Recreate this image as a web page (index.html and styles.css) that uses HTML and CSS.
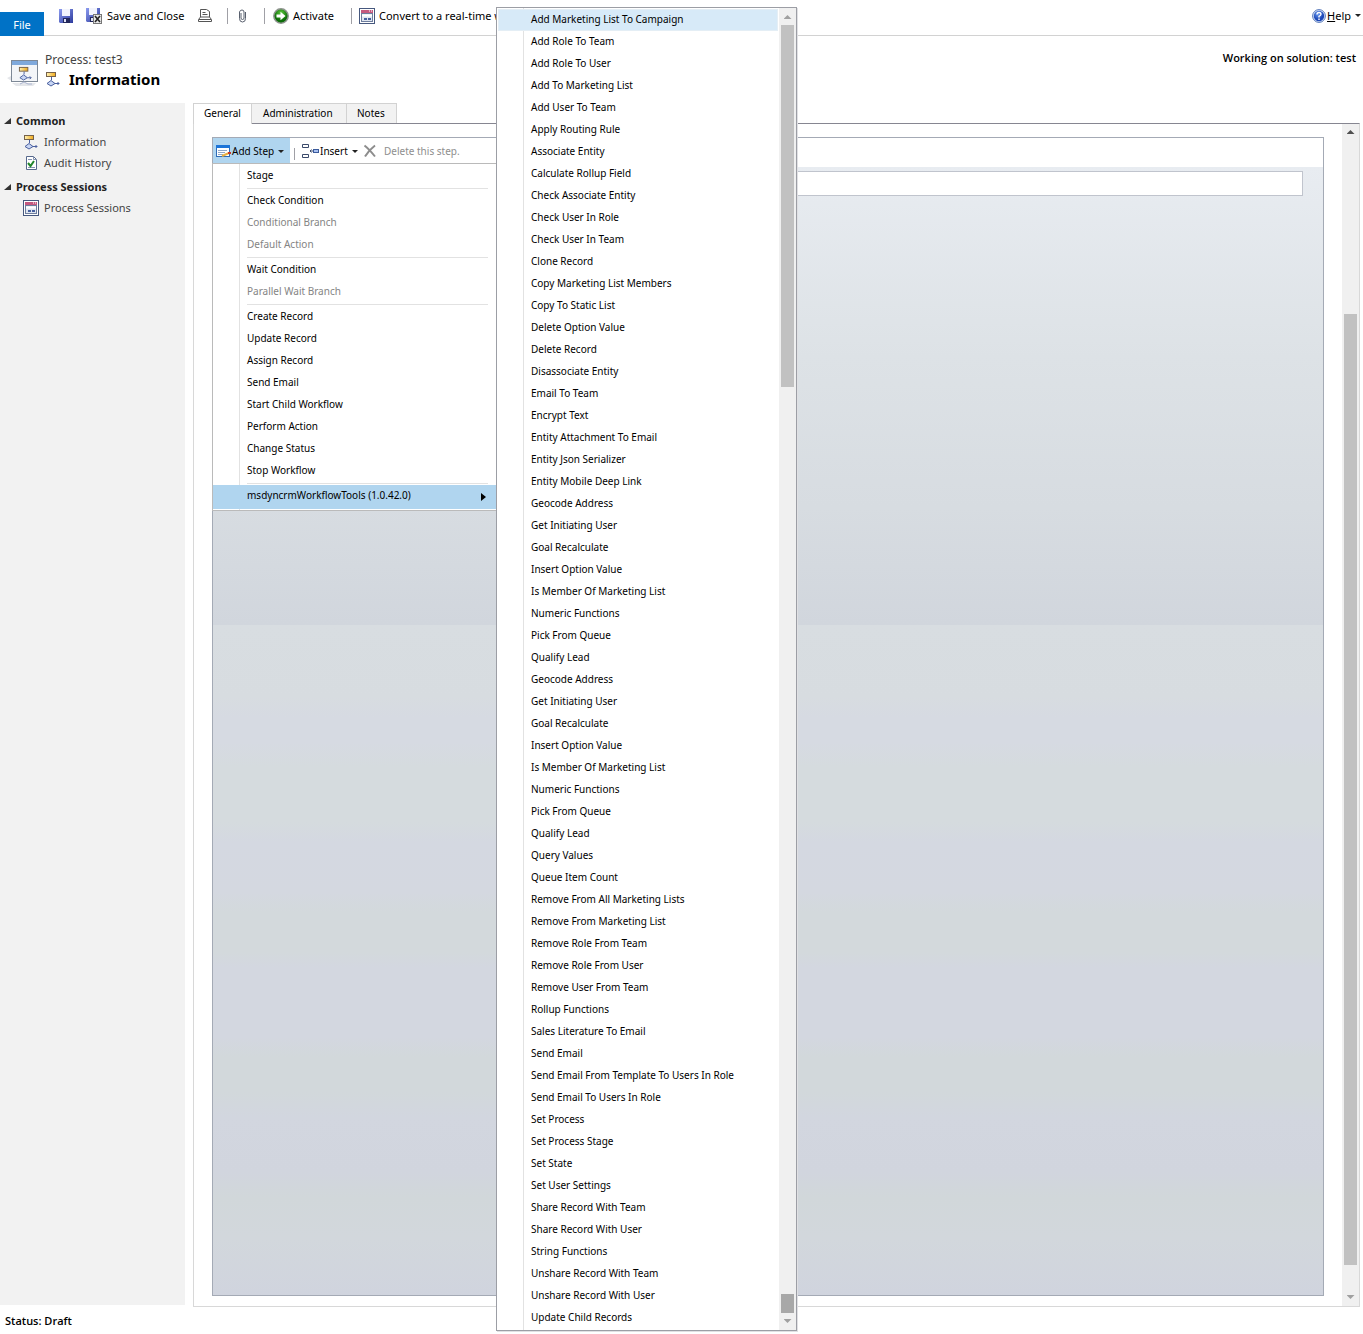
FILE: index.html
```html
<!DOCTYPE html>
<html lang="en">
<head>
<meta charset="utf-8">
<title>Process: test3</title>
<link rel="stylesheet" href="styles.css">
</head>
<body>
<svg class="defs" aria-hidden="true">
  <defs>
    <linearGradient id="gold" x1="0" x2="1"><stop offset="0" stop-color="#fff3b8"/><stop offset="1" stop-color="#f0a818"/></linearGradient>
    <linearGradient id="disk" x1="0" y1="0" x2="1" y2="1"><stop offset="0" stop-color="#8c9cf0"/><stop offset="1" stop-color="#2c3a9c"/></linearGradient>
    <radialGradient id="green" cx=".5" cy=".3"><stop offset="0" stop-color="#5cc83c"/><stop offset="1" stop-color="#0c6c08"/></radialGradient>
    <radialGradient id="blue" cx=".4" cy=".3"><stop offset="0" stop-color="#6c9cf0"/><stop offset="1" stop-color="#1c48b8"/></radialGradient>
    <symbol id="flow" viewBox="0 0 16 16">
      <rect x="1.500" y="1.500" width="9" height="4" fill="url(#gold)" stroke="#75614a"/>
      <path d="M6.500 6v3M10 12.500h4M12.500 11l1.500 1.500-1.500 1.500" fill="none" stroke="#4a5f9e"/>
      <path d="M6 9.500l4 3-4 2.500-4-2.500z" fill="#c8d6f4" stroke="#4a5f9e"/>
    </symbol>
    <symbol id="session" viewBox="0 0 16 16">
      <rect x=".5" y=".5" width="15" height="15" fill="#fff" stroke="#46587e"/>
      <path d="M2 2h12v3H2z" fill="#c4587e"/><path d="M10 3h1M12 3h1" stroke="#fff"/>
      <rect x="2.500" y="5.500" width="11" height="8" fill="#dfe6f0" stroke="#6e7d9d"/>
      <path d="M3 7.500h10" stroke="#fff" stroke-width="2"/><path d="M5 11h3M9 11h3" stroke="#465f9e" stroke-width="2"/>
    </symbol>
    <symbol id="floppy" viewBox="0 0 14 14">
      <path d="M0 0h14v14H1l-1-1z" fill="url(#disk)"/><path d="M3 0h8v7H3z" fill="#f2f4fd"/>
      <path d="M4 9h7v5H4z" fill="#23285c"/><path d="M5 10h2v3H5z" fill="#dfe2f5"/>
    </symbol>
  </defs>
</svg>

<header class="ribbon">
  <button class="file">File</button>
  <div class="commands">
    <button class="cmd save" aria-label="Save"><svg width="14" height="14"><use href="#floppy"/></svg></button>
    <button class="cmd save-close"><svg width="17" height="16" viewBox="0 0 17 16"><use href="#floppy" width="14" height="14"/><rect x="7.500" y="6.500" width="8" height="9" fill="#e8e8e8" stroke="#777"/><path d="M9 8l5 6M14 8l-5 6" stroke="#222" stroke-width="1.600"/></svg>Save and Close</button>
    <button class="cmd print" aria-label="Print"><svg width="14" height="14" viewBox="0 0 14 14"><path d="M2.500 8V.5h6l3 2V8M.5 12.500v-2L2.500 8h9l2 2.500v2zM1 10.500h12M4.500 3.500h3M4.500 5.500h5" fill="none" stroke="#555"/></svg></button>
    <span class="divider"></span>
    <button class="cmd attach" aria-label="Attach File"><svg width="9" height="14" viewBox="0 0 9 14"><path d="M3 4v5q0 1.500 1.500 1.500T6 9V3Q6 1 4 1T1.500 3v6.500q0 3.500 3 3.500t3-3.500V3" fill="none" stroke="#59606e"/></svg></button>
    <span class="divider"></span>
    <button class="cmd activate"><svg width="16" height="16" viewBox="0 0 16 16"><circle cx="8" cy="8" r="7.200" fill="url(#green)" stroke="#8e948e" stroke-width="1.500"/><path d="M3.500 6.500H7.500V3.800L12.500 8l-5 4.200V9.500h-4z" fill="#fff"/></svg>Activate</button>
    <span class="divider"></span>
    <button class="cmd convert"><svg width="16" height="16"><use href="#session"/></svg>Convert to a real-time workflow</button>
    <button class="cmd help"><svg width="14" height="14" viewBox="0 0 14 14"><circle cx="7" cy="7" r="6.400" fill="#dbe6fa" stroke="#5577b8"/><circle cx="7" cy="7" r="5.200" fill="url(#blue)"/><path d="M5 5.500Q5 3.500 7 3.500T9 5.300Q9 6.300 7 7.300V8.500M7 9.500V11" fill="none" stroke="#fff" stroke-width="1.400"/></svg><span><u>H</u>elp</span><i class="caret"></i></button>
  </div>
</header>

<section class="title">
  <svg class="title-icon" width="34" height="34" viewBox="0 0 34 34">
    <path d="M0 22l6-3v7zM5 27h24l-3 3H9z" fill="#e4e6ea"/>
    <rect x="4.500" y="4.500" width="26" height="21" fill="#f3f5f8" stroke="#7d8896"/>
    <path d="M5 5h25v4H5z" fill="#7fa9dc"/><use href="#flow" x="11" y="10" width="15" height="15"/>
    <path d="M13 28l4-2 4 2h4" fill="none" stroke="#aab4d0"/>
  </svg>
  <div class="title-text">
    <div class="record">Process: test3</div>
    <h1><svg width="16" height="16"><use href="#flow"/></svg>Information</h1>
  </div>
  <div class="solution">Working on solution: test</div>
</section>

<main class="main">
  <nav class="sidebar">
    <h2><i class="twisty"></i>Common</h2>
    <a href="#info"><svg width="16" height="16"><use href="#flow"/></svg>Information</a>
    <a href="#audit"><svg width="16" height="16" viewBox="0 0 16 16"><path d="M3.500 1.500h7l3 3v10h-10z" fill="#fff" stroke="#56688c"/><path d="M10.500 1.500v3h3M5 4.500h4M5 12.500h7" fill="none" stroke="#8493b0"/><path d="M5 8l2.500 3L11 6" fill="none" stroke="#22862a" stroke-width="2"/></svg>Audit History</a>
    <h2><i class="twisty"></i>Process Sessions</h2>
    <a href="#sessions"><svg width="16" height="16"><use href="#session"/></svg>Process Sessions</a>
  </nav>

  <div class="content">
    <div class="tabs" role="tablist">
      <button class="tab active" role="tab" aria-selected="true">General</button>
      <button class="tab admin" role="tab">Administration</button>
      <button class="tab notes" role="tab">Notes</button>
    </div>
    <div class="frame">
      <div class="page">
        <div class="designer">
          <div class="toolbar">
            <button class="tool add"><svg width="15" height="14" viewBox="0 0 15 14"><rect x=".5" y="1.500" width="13" height="11" fill="#fff" stroke="#2c6cb8"/><path d="M0 1h14v3H0z" fill="#1c74d8"/><path d="M2 6.500h9M2 8.500h7M2 10.500h5" stroke="#8fa8c8"/><path d="M6 12l7-3" stroke="#e8b040" stroke-width="2"/><path d="M12 9h3" stroke="#c83828" stroke-width="2"/></svg>Add Step<i class="caret"></i></button>
            <span class="tool-divider"></span>
            <button class="tool insert"><svg width="17" height="16" viewBox="0 0 17 16"><path d="M.5 1.500h6v3h-6zM.5 11.500h6v3h-6zM8 8h4M9.500 6.500L8 8l1.500 1.500" fill="none" stroke="#3b4a6b"/><rect x="11.500" y="6.500" width="5" height="3" fill="#a8c0f0" stroke="#3b5a9b"/></svg>Insert<i class="caret"></i></button>
            <button class="tool delete" disabled><svg width="14" height="14" viewBox="0 0 14 14"><path d="M1.500 1.500Q6 5 12 12.500M12 1.500Q6 6 2 12.500" fill="none" stroke="#8d8d8d" stroke-width="2"/></svg>Delete this step.</button>
            <ul class="menu step-menu">
              <li><button>Stage</button></li>
              <li class="sep"><button>Check Condition</button></li>
              <li><button disabled>Conditional Branch</button></li>
              <li><button disabled>Default Action</button></li>
              <li class="sep"><button>Wait Condition</button></li>
              <li><button disabled>Parallel Wait Branch</button></li>
              <li class="sep"><button>Create Record</button></li>
              <li><button>Update Record</button></li>
              <li><button>Assign Record</button></li>
              <li><button>Send Email</button></li>
              <li><button>Start Child Workflow</button></li>
              <li><button>Perform Action</button></li>
              <li><button>Change Status</button></li>
              <li><button>Stop Workflow</button></li>
              <li class="sep open"><button>msdyncrmWorkflowTools (1.0.42.0)<i class="arrow-right"></i></button></li>
            </ul>
          </div>
          <div class="canvas"><input type="text" aria-label="Step description"></div>
        </div>
      </div>
      <div class="scrollbar page-scroll"><i class="up dark"></i><div class="thumb"></div><i class="down"></i></div>
    </div>
  </div>
</main>

<footer class="status">Status: Draft</footer>

<div class="submenu">
  <ul class="menu">
    <li class="hover"><button>Add Marketing List To Campaign</button></li>
    <li><button>Add Role To Team</button></li>
    <li><button>Add Role To User</button></li>
    <li><button>Add To Marketing List</button></li>
    <li><button>Add User To Team</button></li>
    <li><button>Apply Routing Rule</button></li>
    <li><button>Associate Entity</button></li>
    <li><button>Calculate Rollup Field</button></li>
    <li><button>Check Associate Entity</button></li>
    <li><button>Check User In Role</button></li>
    <li><button>Check User In Team</button></li>
    <li><button>Clone Record</button></li>
    <li><button>Copy Marketing List Members</button></li>
    <li><button>Copy To Static List</button></li>
    <li><button>Delete Option Value</button></li>
    <li><button>Delete Record</button></li>
    <li><button>Disassociate Entity</button></li>
    <li><button>Email To Team</button></li>
    <li><button>Encrypt Text</button></li>
    <li><button>Entity Attachment To Email</button></li>
    <li><button>Entity Json Serializer</button></li>
    <li><button>Entity Mobile Deep Link</button></li>
    <li><button>Geocode Address</button></li>
    <li><button>Get Initiating User</button></li>
    <li><button>Goal Recalculate</button></li>
    <li><button>Insert Option Value</button></li>
    <li><button>Is Member Of Marketing List</button></li>
    <li><button>Numeric Functions</button></li>
    <li><button>Pick From Queue</button></li>
    <li><button>Qualify Lead</button></li>
    <li><button>Geocode Address</button></li>
    <li><button>Get Initiating User</button></li>
    <li><button>Goal Recalculate</button></li>
    <li><button>Insert Option Value</button></li>
    <li><button>Is Member Of Marketing List</button></li>
    <li><button>Numeric Functions</button></li>
    <li><button>Pick From Queue</button></li>
    <li><button>Qualify Lead</button></li>
    <li><button>Query Values</button></li>
    <li><button>Queue Item Count</button></li>
    <li><button>Remove From All Marketing Lists</button></li>
    <li><button>Remove From Marketing List</button></li>
    <li><button>Remove Role From Team</button></li>
    <li><button>Remove Role From User</button></li>
    <li><button>Remove User From Team</button></li>
    <li><button>Rollup Functions</button></li>
    <li><button>Sales Literature To Email</button></li>
    <li><button>Send Email</button></li>
    <li><button>Send Email From Template To Users In Role</button></li>
    <li><button>Send Email To Users In Role</button></li>
    <li><button>Set Process</button></li>
    <li><button>Set Process Stage</button></li>
    <li><button>Set State</button></li>
    <li><button>Set User Settings</button></li>
    <li><button>Share Record With Team</button></li>
    <li><button>Share Record With User</button></li>
    <li><button>String Functions</button></li>
    <li><button>Unshare Record With Team</button></li>
    <li><button>Unshare Record With User</button></li>
    <li><button>Update Child Records</button></li>
  </ul>
  <div class="scrollbar menu-scroll"><i class="up"></i><div class="thumb"></div><div class="thumb end"></div><i class="down"></i></div>
</div>
</body>
</html>
```
FILE: styles.css
```css
* { box-sizing: border-box; }

body {
  margin: 0;
  min-height: 100vh;
  position: relative;
  display: flex;
  flex-direction: column;
  background: #fff;
  color: #000;
  font: 10px/16px "Noto Sans", "Open Sans", sans-serif;
}

.defs { position: absolute; width: 0; height: 0; }

button {
  margin: 0;
  padding: 0;
  border: 0;
  background: none;
  color: inherit;
  font: inherit;
  text-align: left;
  white-space: nowrap;
}

svg { flex: none; display: block; }

.caret {
  flex: none;
  border: 3px solid transparent;
  border-top-color: #222;
  border-bottom: 0;
}

/* Ribbon */
.ribbon { display: flex; height: 36px; align-items: flex-end; }
.file {
  width: 44px;
  height: 24px;
  padding-top: 2px;
  background: #0072c6;
  color: #fff;
  font-size: 11px;
  text-align: center;
}
.commands {
  flex: 1;
  min-width: 0;
  height: 36px;
  padding: 0 2px 4px 15px;
  display: flex;
  align-items: center;
  border-bottom: 1px solid #d2d2d2;
}
.cmd { display: flex; align-items: center; gap: 4px; font-size: 11px; }
.save { width: 27px; }
.save-close { width: 112px; }
.print { width: 29px; }
.attach { width: 26px; margin-left: 10px; }
.activate { width: 78px; margin-left: 8px; }
.convert { margin-left: 7px; }
.divider { width: 1px; height: 16px; background: #a0a0a6; }
.help { margin-left: auto; gap: 1px; }
.help .caret { margin-left: 3px; }

/* Title */
.title { display: flex; height: 67px; padding: 15px 7px 0; }
.title-text { flex: 1; padding-left: 4px; }
.record { padding-top: 1px; font-size: 12px; color: #444; }
h1 { display: flex; align-items: center; gap: 8px; margin: 1px 0 0; font-size: 15px; line-height: 20px; }
.title-icon { margin-top: 5px; }
.solution { font: 600 11px/14px "Open Sans", "Noto Sans", sans-serif; }

/* Main */
.main { flex: 1; display: flex; gap: 8px; padding-right: 3px; }
.sidebar { width: 185px; margin-bottom: 2px; padding: 8px 4px; background: #f2f2f2; }
.sidebar h2 { display: flex; align-items: center; gap: 5px; margin: 0; font-size: 11px; line-height: 20px; color: #222; }
.sidebar a { display: flex; align-items: center; gap: 5px; height: 21px; padding-left: 19px; font-size: 11px; color: #444; text-decoration: none; }
.sidebar a + h2 { margin-top: 4px; }
.twisty { border-left: 7px solid transparent; border-bottom: 6px solid #333; }

.content { flex: 1; min-width: 0; display: flex; flex-direction: column; }
.tabs { display: flex; height: 20px; }
.tab { height: 20px; padding: 0 0 2px 11px; border: 1px solid #d2d2d2; border-left: 0; border-bottom: 0; background: #f2f2f2; }
.tab.active { position: relative; width: 59px; height: 21px; padding: 0 0 3px 10px; border-left: 1px solid #d2d2d2; background: #fff; }
.admin { width: 95px; }
.notes { width: 50px; padding-left: 10px; }

.frame { flex: 1; display: flex; border: 1px solid #d8d8d8; border-top-color: #868691; }
.page { flex: 1; min-width: 0; display: flex; padding: 13px 18px 10px; }
.designer { flex: 1; min-width: 0; display: flex; flex-direction: column; border: 1px solid #a4aab5; }

.toolbar { position: relative; display: flex; height: 29px; align-items: flex-start; }
.tool { display: flex; align-items: center; height: 26px; }
.tool:disabled { color: #8e8e8e; }
.add { width: 77px; gap: 1px; padding-left: 3px; background: #b0d5ef; }
.add .caret, .insert .caret { margin-left: 3px; }
.tool-divider { width: 1px; height: 12px; margin: 10px 7px 0 4px; background: #a0a0a6; }
.insert { width: 61px; gap: 1px; }
.delete { gap: 7px; }

.canvas {
  flex: 1;
  padding: 4px 20px;
  background: linear-gradient(#e8ecf1 0, #dde2e6 190px, #d7dce1 340px, #d1d6dd 458px, #d8dde1 458px, #d7dce0 530px, #d6dae2 550px, #d6dae2 575px, #d5dbde 600px, #d5dbde 655px, #d4d8e1 675px, #d4d8e0 725px, #d3d9dc 745px, #d3d9dc 785px, #d3d7e0 800px, #d3d7e0 870px, #d2d8db 890px, #d2d8db 925px, #d2d6df 950px, #d1d5de 1005px, #d1d7da 1030px, #d2d7dc 1070px, #d0d4de 100%);
}
.canvas input { display: block; width: 100%; height: 25px; border: 1px solid #c0c4cd; background: #fff; }

/* Menus */
.menu { margin: 0; padding: 1px; list-style: none; background: linear-gradient(90deg, transparent 26px, #e2e2e2 26px, #e2e2e2 27px, transparent 27px) #fff; }
.menu button { display: flex; align-items: center; width: 100%; height: 22px; padding: 0 0 2px 34px; }
.menu button:disabled { color: #848484; }
.menu .sep::before { content: ""; display: block; height: 1px; margin: 1px 8px 1px 34px; background: #e2e2e2; }
.step-menu { position: absolute; top: 25px; left: -1px; width: 285px; padding: 1px 0; border: 1px solid #bababa; }
.menu .open button { height: 24px; padding-bottom: 4px; background: #b0d5ef; }
.arrow-right { margin: 3px 10px 0 auto; border: 4px solid transparent; border-left: 5px solid #000; border-right: 0; }

.submenu {
  position: absolute;
  top: 7px;
  left: 496px;
  width: 301px;
  display: flex;
  border: 1px solid #9c9ea5;
  background: #fff;
  box-shadow: 1px 1px 0 #e0e0e3;
}
.submenu .menu { flex: 1; }
.submenu button { padding-left: 33px; }
.hover button { background: #d7eaf8; box-shadow: inset 0 0 0 1px #e4eef5; }

/* Scrollbars */
.scrollbar { flex: none; width: 17px; display: flex; flex-direction: column; align-items: center; background: #f0f0f0; }
.scrollbar i { flex: none; width: 8px; height: 4px; background: #a0a0a0; }
.up { clip-path: polygon(50% 0, 100% 100%, 0 100%); }
.down { clip-path: polygon(0 0, 100% 0, 50% 100%); }
.scrollbar .dark { background: #505050; }
.thumb { width: 13px; background: #c1c1c1; }
.page-scroll { padding: 6px 0 7px; }
.page-scroll .thumb { flex: 1; margin: 180px 0 30px; }
.menu-scroll { padding: 7px 0; }
.menu-scroll .thumb { height: 362px; margin-top: 6px; }
.menu-scroll .end { height: 19px; margin: auto 0 6px; background: #a8a8a8; }

.status { height: 27px; padding: 6px 5px; font: 600 11px/16px "Open Sans", "Noto Sans", sans-serif; }
```
